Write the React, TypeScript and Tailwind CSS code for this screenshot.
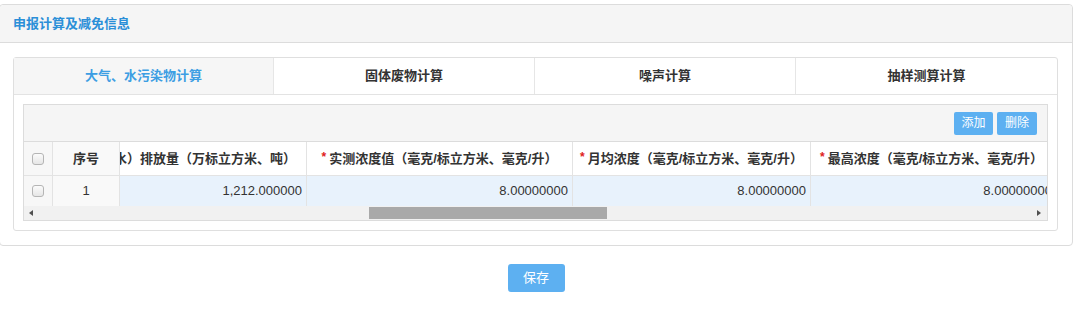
import React from "react";

const FONT = { fontFamily: '"Liberation Sans", Arial, "Noto Sans CJK SC", sans-serif' };

function Box() {
  return <span className="inline-block w-[12px] h-[12px] rounded-[3px] border border-[#b5b5b5] bg-gradient-to-b from-[#fbfbfb] to-[#e6e6e6]" />;
}

function Star() {
  return <span className="text-[#e02020] mr-[3px] text-[12px] relative top-[-2px]">*</span>;
}

export default function App() {
  return (
    <div className="w-[1080px] h-[318px] bg-white overflow-hidden" style={FONT}>
      <div className="mt-[4px] -ml-px w-[1074px] border border-[#dcdcdc] rounded-[4px]">
        <div className="h-[38px] bg-[#f5f5f5] border-b border-[#dcdcdc] rounded-t-[4px] flex items-center pl-[13px] text-[13px] font-bold text-[#2b8fd8]">
          申报计算及减免信息
        </div>
        <div className="pt-[14px] pb-[14px] pl-[13px] pr-[14px]">
          <div className="border border-[#dfdfdf] rounded-[3px]">
            <div className="flex h-[37px] border-b border-[#e3e3e3] text-[13px] font-bold">
              <div className="w-[260px] bg-[#f6f6f6] border-r border-[#e6e6e6] flex items-center justify-center text-[#3d9ee3]">大气、水污染物计算</div>
              <div className="w-[261px] border-r border-[#e6e6e6] flex items-center justify-center text-[#333]">固体废物计算</div>
              <div className="w-[261px] border-r border-[#e6e6e6] flex items-center justify-center text-[#333]">噪声计算</div>
              <div className="flex-1 flex items-center justify-center text-[#333]">抽样测算计算</div>
            </div>
            <div className="p-[9px]">
              <div className="border border-[#dcdcdc]">
                <div className="h-[37px] bg-[#f5f5f5] border-b border-[#dcdcdc] flex items-center justify-end pr-[10px] gap-[4px]">
                  <button className="w-[39px] h-[23px] bg-[#5db0f1] text-white text-[12px] rounded-[2px]">添加</button>
                  <button className="w-[40px] h-[23px] bg-[#5db0f1] text-white text-[12px] rounded-[2px]">删除</button>
                </div>
                <div className="flex">
                  <div className="w-[29px] shrink-0 border-r border-[#e3e3e3] bg-[#f7f7f7]">
                    <div className="h-[34px] flex items-center justify-center border-b border-[#e3e3e3]"><Box /></div>
                    <div className="h-[30px] flex items-center justify-center"><Box /></div>
                  </div>
                  <div className="w-[67px] shrink-0 border-r border-[#e3e3e3] bg-[#f9f9f9]">
                    <div className="h-[34px] flex items-center justify-center border-b border-[#e3e3e3] text-[13px] font-bold text-[#333]">序号</div>
                    <div className="h-[30px] flex items-center justify-center text-[13px] text-[#333]">1</div>
                  </div>
                  <div className="flex-1 overflow-hidden flex">
                    <div className="w-[187px] shrink-0 border-r border-[#e3e3e3]">
                      <div className="h-[34px] flex items-center justify-end overflow-hidden pr-[10px] border-b border-[#e3e3e3] text-[13px] font-bold text-[#333] whitespace-nowrap">
                        <span className="shrink-0">废气（废水）排放量（万标立方米、吨）</span>
                      </div>
                      <div className="h-[30px] bg-[#e8f2fc] flex items-center justify-end pr-[4px] text-[13px] text-[#333]">1,212.000000</div>
                    </div>
                    <div className="w-[266px] shrink-0 border-r border-[#e3e3e3]">
                      <div className="h-[34px] flex items-center justify-center border-b border-[#e3e3e3] text-[13px] font-bold text-[#333] whitespace-nowrap"><Star />实测浓度值（毫克/标立方米、毫克/升）</div>
                      <div className="h-[30px] bg-[#e8f2fc] flex items-center justify-end pr-[4px] text-[13px] text-[#333]">8.00000000</div>
                    </div>
                    <div className="w-[238px] shrink-0 border-r border-[#e3e3e3]">
                      <div className="h-[34px] flex items-center justify-center border-b border-[#e3e3e3] text-[13px] font-bold text-[#333] whitespace-nowrap"><Star />月均浓度（毫克/标立方米、毫克/升）</div>
                      <div className="h-[30px] bg-[#e8f2fc] flex items-center justify-end pr-[4px] text-[13px] text-[#333]">8.00000000</div>
                    </div>
                    <div className="w-[245px] shrink-0">
                      <div className="h-[34px] flex items-center pl-[9px] border-b border-[#e3e3e3] text-[13px] font-bold text-[#333] whitespace-nowrap"><Star />最高浓度（毫克/标立方米、毫克/升）</div>
                      <div className="h-[30px] bg-[#e8f2fc] flex items-center justify-end pr-[4px] text-[13px] text-[#333]">8.00000000</div>
                    </div>
                  </div>
                </div>
                <div className="h-[14px] bg-[#f1f1f1] flex items-center relative">
                  <svg className="absolute left-[5px] top-[4px]" width="5" height="6" viewBox="0 0 5 6"><path d="M4 0 L0 3 L4 6 Z" fill="#505050" /></svg>
                  <div className="absolute left-[345px] top-[1px] w-[238px] h-[12px] bg-[#a9a9a9]" />
                  <svg className="absolute right-[6px] top-[4px]" width="5" height="6" viewBox="0 0 5 6"><path d="M1 0 L5 3 L1 6 Z" fill="#505050" /></svg>
                </div>
              </div>
            </div>
          </div>
        </div>
      </div>
      <div className="w-[1072px] flex justify-center mt-[18px]">
        <button className="w-[57px] h-[28px] bg-[#5db0f1] text-white text-[13px] rounded-[3px]">保存</button>
      </div>
    </div>
  );
}
